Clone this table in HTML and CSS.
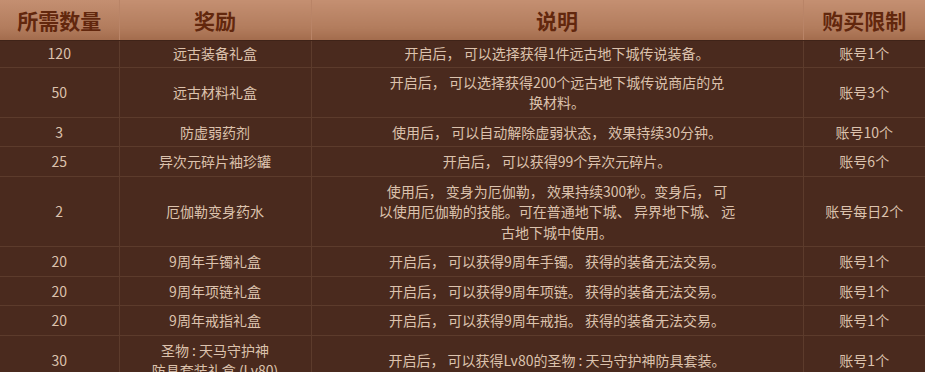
FILE: index.html
```html
<!DOCTYPE html>
<html lang="zh-CN">
<head>
<meta charset="utf-8">
<title>购买限制</title>
<link rel="stylesheet" href="styles.css">
</head>
<body>
<table class="shop">
  <colgroup>
    <col class="c-num">
    <col class="c-reward">
    <col class="c-desc">
    <col class="c-limit">
  </colgroup>
  <thead>
    <tr>
      <th>所需数量</th>
      <th>奖励</th>
      <th>说明</th>
      <th>购买限制</th>
    </tr>
  </thead>
  <tbody>
    <tr class="first">
      <td>120</td>
      <td>远古装备礼盒</td>
      <td>开启后， 可以选择获得1件远古地下城传说装备。</td>
      <td>账号1个</td>
    </tr>
    <tr>
      <td>50</td>
      <td>远古材料礼盒</td>
      <td>开启后， 可以选择获得200个远古地下城传说商店的兑<br>换材料。</td>
      <td>账号3个</td>
    </tr>
    <tr>
      <td>3</td>
      <td>防虚弱药剂</td>
      <td>使用后， 可以自动解除虚弱状态， 效果持续30分钟。</td>
      <td>账号10个</td>
    </tr>
    <tr>
      <td>25</td>
      <td>异次元碎片袖珍罐</td>
      <td>开启后， 可以获得99个异次元碎片。</td>
      <td>账号6个</td>
    </tr>
    <tr>
      <td>2</td>
      <td>厄伽勒变身药水</td>
      <td>使用后， 变身为厄伽勒， 效果持续300秒。变身后， 可<br>以使用厄伽勒的技能。可在普通地下城、 异界地下城、 远<br>古地下城中使用。</td>
      <td>账号每日2个</td>
    </tr>
    <tr>
      <td>20</td>
      <td>9周年手镯礼盒</td>
      <td>开启后， 可以获得9周年手镯。 获得的装备无法交易。</td>
      <td>账号1个</td>
    </tr>
    <tr>
      <td>20</td>
      <td>9周年项链礼盒</td>
      <td>开启后， 可以获得9周年项链。 获得的装备无法交易。</td>
      <td>账号1个</td>
    </tr>
    <tr>
      <td>20</td>
      <td>9周年戒指礼盒</td>
      <td>开启后， 可以获得9周年戒指。 获得的装备无法交易。</td>
      <td>账号1个</td>
    </tr>
    <tr>
      <td>30</td>
      <td>圣物 : 天马守护神<br>防具套装礼盒 (Lv80)</td>
      <td>开启后， 可以获得Lv80的圣物 : 天马守护神防具套装。</td>
      <td>账号1个</td>
    </tr>
  </tbody>
</table>
</body>
</html>
```

FILE: styles.css
```css
html, body {
  margin: 0;
  padding: 0;
  background: #4a2a1e;
}

.shop {
  width: 925px;
  border-collapse: collapse;
  table-layout: fixed;
  font-family: "Noto Sans CJK SC", "Microsoft YaHei", sans-serif;
}

.c-num { width: 119px; }
.c-reward { width: 192px; }
.c-desc { width: 492px; }
.c-limit { width: 122px; }

.shop th {
  height: 40px;
  padding: 0;
  background: linear-gradient(#c48f71, #b27c5d 70%, #a36c4d);
  color: #62270d;
  font-size: 21px;
  font-weight: 700;
  line-height: 40px;
  border-right: 1px solid #b98467;
  border-bottom: 1px solid #3f2318;
  text-align: center;
}

.shop th:last-child,
.shop td:last-child {
  border-right: none;
}

.shop td {
  padding: 4px 0;
  color: #dcc2ad;
  font-size: 14px;
  line-height: 20.5px;
  text-align: center;
  vertical-align: middle;
  border-right: 1px solid #5c3b2c;
  border-bottom: 1px solid #5c3b2c;
}

.shop tr.first td {
  padding: 2px 0 3px;
}
```
